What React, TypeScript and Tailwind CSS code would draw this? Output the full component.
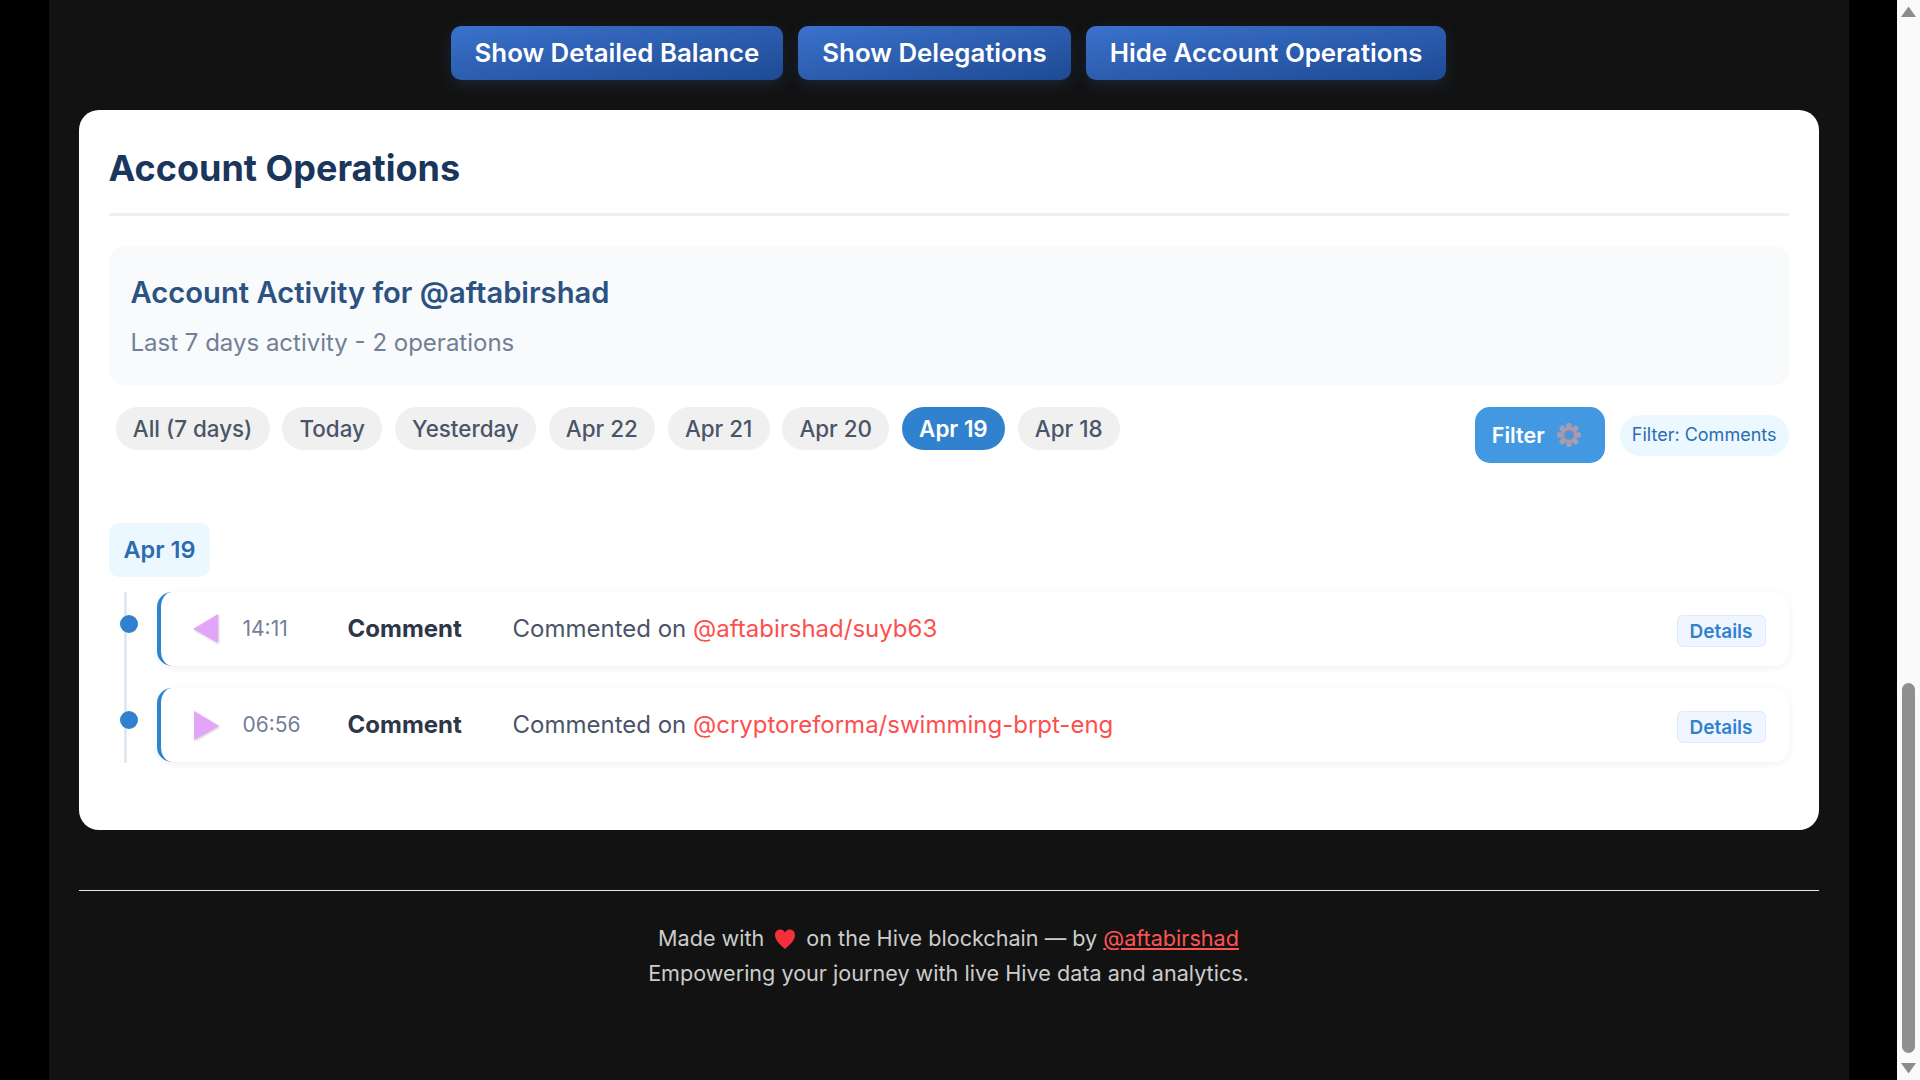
const pills = ["All (7 days)", "Today", "Yesterday", "Apr 22", "Apr 21", "Apr 20", "Apr 19", "Apr 18"];

const operations = [
  { time: "14:11", link: "@aftabirshad/suyb63", dir: "in" },
  { time: "06:56", link: "@cryptoreforma/swimming-brpt-eng", dir: "out" },
];

function Triangle({ dir }: { dir: string }) {
  return (
    <svg width="28" height="30" viewBox="0 0 28 30" className="shrink-0 drop-shadow-[1px_1px_1px_rgba(0,0,0,0.2)]">
      {dir === "in" ? <polygon points="26,0 26,29 1,15" fill="#e3a5f7" /> : <polygon points="2,1 2,30 27,16" fill="#e3a5f7" />}
    </svg>
  );
}

function Gear() {
  const teeth = [0, 45, 90, 135, 180, 225, 270, 315];
  return (
    <svg width="24" height="24" viewBox="0 0 24 24" className="shrink-0">
      {teeth.map((deg) => (
        <rect key={deg} x="9.200" y="0" width="5.600" height="6" rx="2" fill="#a79cb2" transform={`rotate(${deg} 12 12)`} />
      ))}
      <circle cx="12" cy="12" r="7.500" fill="#a79cb2" />
      <circle cx="12" cy="12" r="4.600" fill="#4299e1" stroke="#8f89a8" strokeWidth="1.500" />
    </svg>
  );
}

function Scrollbar() {
  return (
    <div className="flex w-[23px] shrink-0 flex-col items-center bg-[#fafafa]">
      <svg width="15" height="11" viewBox="0 0 15 11" className="mt-[6px]">
        <path d="M7.5 0.5 L15 11 H0 Z" fill="#8c8c8c" />
      </svg>
      <div className="mt-[666px] h-[370px] w-[13px] rounded-full bg-[#8f8f8f]" />
      <svg width="15" height="11" viewBox="0 0 15 11" className="mt-[10px]">
        <path d="M0 0 H15 L7.5 10.5 Z" fill="#8c8c8c" />
      </svg>
    </div>
  );
}

export default function App() {
  return (
    <div className="flex h-screen w-full overflow-hidden bg-black font-['Inter',sans-serif]">
      <div className="min-w-0 flex-1">
        <main className="mx-auto h-full w-[1800px] bg-[#121212] px-[30px] pt-[26px]">
          <div className="flex justify-center gap-[15px]">
            {["Show Detailed Balance", "Show Delegations", "Hide Account Operations"].map((label) => (
              <button
                key={label}
                type="button"
                className="h-[54px] rounded-[10px] bg-gradient-to-br from-[#3b72cc] to-[#1e4a94] px-[24px] text-[25.8px] font-semibold text-white shadow-[0_5px_15px_rgba(44,82,130,0.3)]"
              >
                {label}
              </button>
            ))}
          </div>

          <section className="mt-[30px] h-[720px] rounded-[20px] bg-white p-[30px]">
            <h2 className="h-[76px] border-b-[3px] border-[#eeeff3] text-[36px] leading-[56px] font-bold text-[#1a365d]">
              Account Operations
            </h2>

            <div className="mt-[30px] h-[139px] rounded-[15px] bg-[#f8fafc] px-[22px] pt-[29px]">
              <h3 className="text-[29.2px] leading-[36px] font-semibold text-[#2c5282]">Account Activity for @aftabirshad</h3>
              <p className="mt-[17px] text-[24px] leading-[30px] text-[#718096]">Last 7 days activity - 2 operations</p>
            </div>

            <div className="mt-[22px] flex items-start justify-between">
              <div className="flex gap-[12.5px] pl-[7px]">
                {pills.map((pill) => (
                  <span
                    key={pill}
                    className={`flex h-[43px] items-center rounded-full px-[17.3px] text-[22.4px] font-medium ${
                      pill === "Apr 19" ? "bg-[#3182ce] font-semibold text-white" : "bg-[#f0f0f0] text-[#4a5568]"
                    }`}
                  >
                    {pill}
                  </span>
                ))}
              </div>
              <div className="flex items-center gap-[15px]">
                <button
                  type="button"
                  className="flex h-[56px] w-[130px] items-center gap-3 rounded-[15px] bg-[#4299e1] pl-[17px] text-[21.5px] font-semibold text-white"
                >
                  Filter
                  <Gear />
                </button>
                <span className="flex h-[41px] items-center rounded-full bg-[#ebf8ff] px-[12px] pb-[2px] text-[18px] text-[#2b6cb0]">
                  Filter: Comments
                </span>
              </div>
            </div>

            <div className="mt-[60px] inline-flex h-[54px] items-center rounded-[10px] bg-[#ebf8ff] px-[15px] text-[23.5px] font-semibold text-[#2b6cb0]">
              Apr 19
            </div>

            <div className="relative mt-[15px] flex flex-col gap-[22px] pl-[48px]">
              <div className="absolute top-0 bottom-[-1px] left-[15px] w-[3px] bg-[#e2e8f0]" />
              {operations.map((op) => (
                <div
                  key={op.time}
                  className="relative flex h-[74px] items-center rounded-[15px] border-l-[4px] border-[#3182ce] bg-white pr-[23px] pl-[31px] shadow-[0_2px_8px_rgba(0,0,0,0.06)]"
                >
                  <div className="absolute top-[22.500px] left-[-41px] h-[18px] w-[18px] rounded-full bg-[#3182ce]" />
                  <Triangle dir={op.dir} />
                  <span className="ml-[23px] w-[105px] text-[21px] text-[#718096]">{op.time}</span>
                  <span className="w-[165px] text-[24px] font-bold text-[#2d3748]">Comment</span>
                  <span className="flex-1 text-[24px] text-[#4a5568]">
                    Commented on <span className="text-[#fc4f4f]">{op.link}</span>
                  </span>
                  <button
                    type="button"
                    className="mt-[3px] h-[32px] w-[89px] rounded-[6px] border border-[#dbeafe] bg-[#eff6ff] pt-[2px] text-[19px] font-semibold text-[#3182ce]"
                  >
                    Details
                  </button>
                </div>
              ))}
            </div>
          </section>

          <footer className="mt-[60px] border-t border-[#e2e8f0] pt-[30px] text-center text-[21.6px] leading-[35px] text-[#cccccc]">
            <p className="flex items-center justify-center">
              Made with
              <svg width="22" height="20" viewBox="0 0 24 22" className="mx-[10px]">
                <path d="M12 22 C4 15 1 11 1 6.500 C1 2.500 4 0.500 7 0.500 C9 0.500 11 1.500 12 4 C13 1.500 15 0.500 17 0.500 C20 0.500 23 2.500 23 6.500 C23 11 20 15 12 22 Z" fill="#f4303a" />
              </svg>
              on the Hive blockchain — by&nbsp;
              <a href="#" className="text-[#ff5252] underline">@aftabirshad</a>
            </p>
            <p>Empowering your journey with live Hive data and analytics.</p>
          </footer>
        </main>
      </div>
      <Scrollbar />
    </div>
  );
}
